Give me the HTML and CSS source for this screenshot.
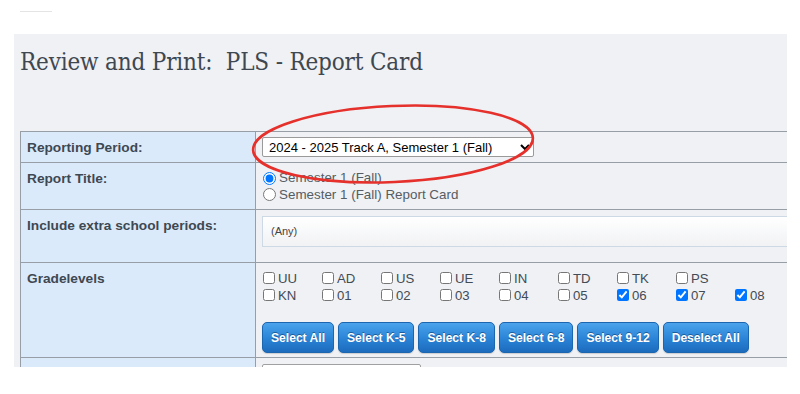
FILE: index.html
```html
<!DOCTYPE html>
<html>
<head>
<meta charset="utf-8">
<link rel="stylesheet" href="styles.css">
</head>
<body>
<div class="topline"></div>
<div class="panel">
  <h1 class="title">Review and Print:&nbsp; PLS - Report Card</h1>
  <table class="form">
    <colgroup><col class="c-label"><col class="c-value"></colgroup>
    <tr class="r1">
      <th>Reporting Period:</th>
      <td><select class="period"><option>2024 - 2025 Track A, Semester 1 (Fall)</option></select></td>
    </tr>
    <tr class="r2">
      <th>Report Title:</th>
      <td>
        <label class="radio"><input type="radio" name="title" checked>Semester 1 (Fall)</label>
        <label class="radio"><input type="radio" name="title">Semester 1 (Fall) Report Card</label>
      </td>
    </tr>
    <tr class="r3">
      <th>Include extra school periods:</th>
      <td><div class="multi">(Any)</div></td>
    </tr>
    <tr class="r4">
      <th>Gradelevels</th>
      <td>
        <div class="grades">
          <label class="chk"><input type="checkbox">UU</label>
          <label class="chk"><input type="checkbox">AD</label>
          <label class="chk"><input type="checkbox">US</label>
          <label class="chk"><input type="checkbox">UE</label>
          <label class="chk"><input type="checkbox">IN</label>
          <label class="chk"><input type="checkbox">TD</label>
          <label class="chk"><input type="checkbox">TK</label>
          <label class="chk"><input type="checkbox">PS</label>
          <span></span>
          <label class="chk"><input type="checkbox">KN</label>
          <label class="chk"><input type="checkbox">01</label>
          <label class="chk"><input type="checkbox">02</label>
          <label class="chk"><input type="checkbox">03</label>
          <label class="chk"><input type="checkbox">04</label>
          <label class="chk"><input type="checkbox">05</label>
          <label class="chk"><input type="checkbox" checked>06</label>
          <label class="chk"><input type="checkbox" checked>07</label>
          <label class="chk"><input type="checkbox" checked>08</label>
        </div>
        <div class="btns">
          <button class="btn">Select All</button>
          <button class="btn">Select K-5</button>
          <button class="btn">Select K-8</button>
          <button class="btn">Select 6-8</button>
          <button class="btn">Select 9-12</button>
          <button class="btn">Deselect All</button>
        </div>
      </td>
    </tr>
    <tr class="r5">
      <th></th>
      <td><div class="box"></div></td>
    </tr>
  </table>
</div>
<svg class="annot" width="300" height="96" viewBox="0 0 300 96">
  <ellipse cx="143" cy="48" rx="140" ry="38" fill="none" stroke="#e5302c" stroke-width="2.6" transform="rotate(-2.5 143 48)"/>
</svg>
</body>
</html>
```
FILE: styles.css
```css
body {
  margin: 0;
  background: #ffffff;
  font-family: "Liberation Sans", Arial, sans-serif;
  position: relative;
}

.topline {
  width: 32px;
  height: 1px;
  background: #e4e4e4;
  margin: 11px 0 0 20px;
}

.panel {
  margin: 22px 0 0 14px;
  width: 773px;
  height: 333px;
  background: #eff1f4;
  overflow: hidden;
  padding: 11px 0 0 6px;
  box-sizing: border-box;
}

.title {
  margin: 0 0 52px 0;
  font-family: "DejaVu Serif", "Liberation Serif", serif;
  font-stretch: condensed;
  font-weight: normal;
  font-size: 24px;
  letter-spacing: -0.17px;
  line-height: 34px;
  color: #3f4750;
}

.form {
  border-collapse: collapse;
  table-layout: fixed;
  width: 790px;
}

.c-label { width: 235px; }

.form th,
.form td {
  border: 1px solid #979ea5;
  vertical-align: top;
  box-sizing: border-box;
}

.form th {
  background: #dbeafa;
  text-align: left;
  font-weight: bold;
  font-size: 13.7px;
  line-height: 16px;
  color: #3e4852;
  padding: 8px 6px 0 6px;
}

.form td {
  background: #eff1f4;
  padding: 0 0 0 6px;
  font-size: 13px;
  color: #4a525b;
}

.r1 th, .r1 td { height: 31px; }
.r2 th, .r2 td { height: 47px; }
.r3 th, .r3 td { height: 53px; }
.r4 th, .r4 td { height: 95px; }
.r5 th, .r5 td { height: 30px; }

.period {
  margin-top: 5px;
  width: 272px;
  height: 20px;
  font-family: "Liberation Sans", Arial, sans-serif;
  font-size: 13px;
  color: #000;
  background: #fff;
  border: 1px solid #9a9a9a;
  border-radius: 2px;
  padding: 0 2px;
}

.r2 td { padding-top: 7px; }

.radio {
  display: flex;
  align-items: center;
  height: 16.5px;
  line-height: 16px;
  font-size: 13.4px;
  color: #555c64;
}

.radio input {
  margin: 0 3px 0 1px;
  width: 13px;
  height: 13px;
}

.r3 td { padding-top: 6px; }

.multi {
  height: 31px;
  border: 1px solid #cdd9e5;
  border-right: none;
  background: linear-gradient(#ffffff, #f1f2f4);
  box-sizing: border-box;
  font-size: 11px;
  color: #444;
  line-height: 29px;
  padding-left: 8px;
}

.r4 td { padding-top: 7px; }

.grades {
  display: grid;
  grid-template-columns: repeat(9, 59px);
  row-gap: 1px;
}

.chk {
  display: flex;
  align-items: center;
  height: 16px;
  color: #434b54;
  font-size: 13.2px;
}

.chk input {
  margin: 0 3px 0 1px;
  width: 12px;
  height: 12px;
}

.btns {
  display: flex;
  gap: 4px;
  margin-top: 19px;
}

.btn {
  height: 31px;
  padding: 0 8px;
  border: 1px solid #1c66b0;
  border-radius: 5px;
  background: linear-gradient(#4aa3eb, #2a83d6 55%, #1c6bbd);
  color: #fff;
  font-family: "Liberation Sans", Arial, sans-serif;
  font-weight: bold;
  font-size: 12.1px;
  text-shadow: 0 -1px 0 rgba(0, 40, 90, 0.5);
  box-shadow: 0 1px 1px rgba(0, 0, 0, 0.15);
}

.r5 td { padding-top: 6px; }

.box {
  width: 157px;
  height: 20px;
  border: 1px solid #a0a0a0;
  border-radius: 2px;
  background: #fff;
}

.annot {
  position: absolute;
  left: 250px;
  top: 96px;
}
```
